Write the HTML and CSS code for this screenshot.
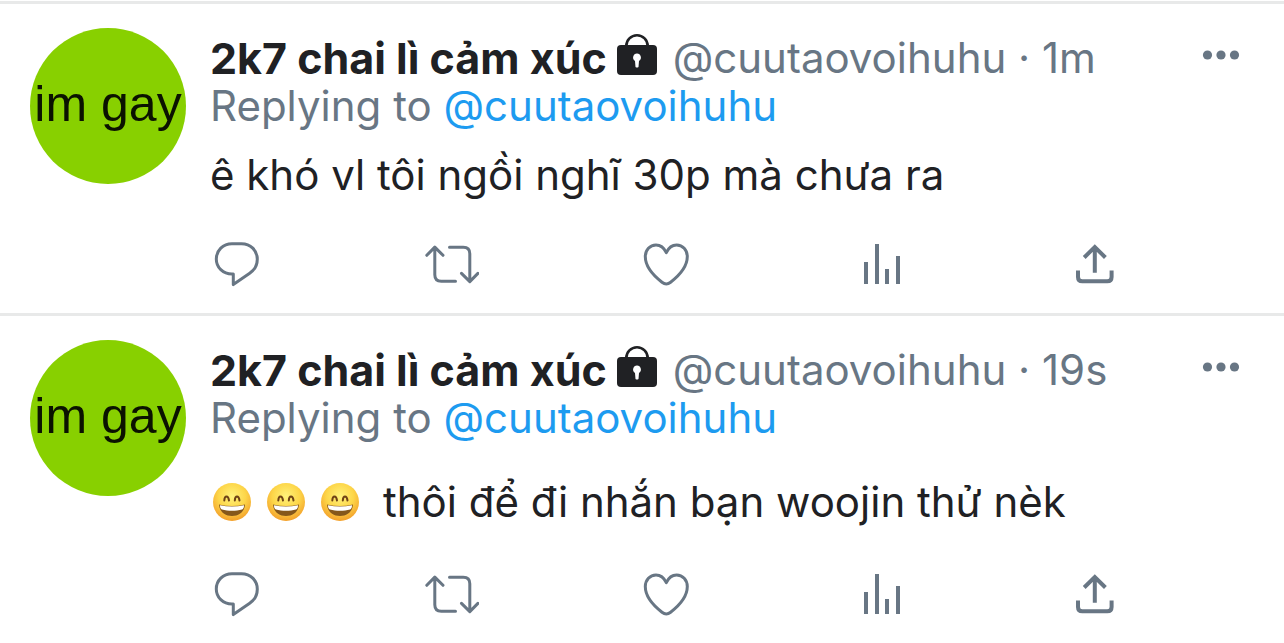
FILE: index.html
```html
<!DOCTYPE html>
<html lang="vi">
<head>
  <meta charset="UTF-8" />
  <meta name="viewport" content="width=device-width, initial-scale=1.0"/>
  <title>Tweets</title>
  <link rel="stylesheet" href="styles.css">
</head>
<body>
  <!-- shared icons -->
  <svg class="sprite" aria-hidden="true">
    <defs>
      <radialGradient id="face" cx="50%" cy="35%" r="65%">
        <stop offset="0" stop-color="#fff27a"/>
        <stop offset="0.55" stop-color="#fdd649"/>
        <stop offset="1" stop-color="#f3a02b"/>
      </radialGradient>
    </defs>
    <symbol id="reply" viewBox="0 0 54 48">
      <path d="M22 2.7h9.5c9 0 15.8 6.8 15.8 15.5 0 6-2.8 10.8-7.6 14L23.3 43.6V33H22C13 33 6.3 26.5 6.3 18S13 2.7 22 2.7z"/>
    </symbol>
    <symbol id="retweet" viewBox="0 0 54 48">
      <path d="M1.8 14.3l8-8.2 8.2 8.2M9.8 6.5v27.3q0 6.5 6.5 6.5h14.2M24.5 6.3h13.8q6.5 0 6.5 6.5v27.4M36.5 32.4l8.3 8.2 8.1-8.2"/>
    </symbol>
    <symbol id="heart" viewBox="0 0 54 48">
      <path d="M27.3 11.6C25 6.8 21.5 4 17 4 11 4 6.3 9 6.3 15.6c0 8.8 6.8 18 16.7 25.7 3.2 2.4 5.4 2.4 8.6 0 9.9-7.7 16.7-16.9 16.7-25.7C48.3 9 43.6 4 37.6 4c-4.5 0-8 2.800-10.3 7.600z"/>
    </symbol>
    <symbol id="stats" viewBox="0 0 54 48">
      <path d="M12 21v22M23 3v40M33 28v15M44 15v28"/>
    </symbol>
    <symbol id="share" viewBox="0 0 54 48">
      <path d="M10 29.5V36q0 4.3 4.3 4.3h25q4.3 0 4.3-4.3v-6.5M26.8 31.8V6M16.2 16.500L26.8 6l10.600 10.500"/>
    </symbol>
    <symbol id="lock" viewBox="0 0 40 42">
      <path d="M9.3 14v-2a10.7 10.7 0 0 1 21.4 0v2" fill="none" stroke="currentColor" stroke-width="2.6"/>
      <rect y="11" width="40" height="30" rx="4"/>
      <path d="M20 19.5a4 4 0 0 1 2 7.4l-.5 6q-1.5 1.2-3 0l-.5-6a4 4 0 0 1 2-7.4z" fill="#fff"/>
    </symbol>
    <symbol id="dots" viewBox="0 0 38 12">
      <circle cx="5.5" cy="6" r="4.6"/>
      <circle cx="19" cy="6" r="4.6"/>
      <circle cx="32.5" cy="6" r="4.6"/>
    </symbol>
    <symbol id="grin" viewBox="0 0 38 38">
      <circle cx="19" cy="19" r="19" fill="url(#face)"/>
      <path d="M11.3 17.5c.3-5.3 4-5.3 4.7 0M21.8 17.5c.3-5.3 4-5.3 4.7 0" fill="none" stroke="#704316" stroke-width="2" stroke-linecap="round"/>
      <path d="M6 21.5q13 3 26 0c-.5 7-5.5 11.5-13 11.5S6.5 28.5 6 21.5z" fill="#85571b"/>
      <path d="M7 22.3q12 2.6 24 0c0 2.5-.6 3.7-2 4.2-6 1.7-14 1.7-20 0-1.4-.5-2-1.7-2-4.2z" fill="#fff"/>
    </symbol>
  </svg>

  <main class="timeline">
    <article class="tweet">
      <div class="avatar">im gay</div>
      <div class="content">
        <header class="tweet-header">
          <span class="name">2k7 chai lì cảm xúc</span>
          <svg class="lock"><use href="#lock"/></svg>
          <span class="meta">@cuutaovoihuhu · 1m</span>
          <button class="more" type="button" aria-label="More"><svg><use href="#dots"/></svg></button>
        </header>
        <div class="replying">Replying to <a href="#">@cuutaovoihuhu</a></div>
        <p class="text">ê khó vl tôi ngồi nghĩ 30p mà chưa ra</p>
        <div class="actions">
          <button type="button" aria-label="Reply"><svg><use href="#reply"/></svg></button>
          <button type="button" aria-label="Retweet"><svg><use href="#retweet"/></svg></button>
          <button type="button" aria-label="Like"><svg><use href="#heart"/></svg></button>
          <button class="bold" type="button" aria-label="Stats"><svg><use href="#stats"/></svg></button>
          <button class="bold" type="button" aria-label="Share"><svg><use href="#share"/></svg></button>
        </div>
      </div>
    </article>

    <article class="tweet">
      <div class="avatar">im gay</div>
      <div class="content">
        <header class="tweet-header">
          <span class="name">2k7 chai lì cảm xúc</span>
          <svg class="lock"><use href="#lock"/></svg>
          <span class="meta">@cuutaovoihuhu · 19s</span>
          <button class="more" type="button" aria-label="More"><svg><use href="#dots"/></svg></button>
        </header>
        <div class="replying">Replying to <a href="#">@cuutaovoihuhu</a></div>
        <p class="text with-emoji">
          <span class="emojis">
            <svg role="img" aria-label="😄"><use href="#grin"/></svg>
            <svg role="img" aria-label="😄"><use href="#grin"/></svg>
            <svg role="img" aria-label="😄"><use href="#grin"/></svg>
          </span>
          <span>thôi để đi nhắn bạn woojin thử nèk</span>
        </p>
        <div class="actions">
          <button type="button" aria-label="Reply"><svg><use href="#reply"/></svg></button>
          <button type="button" aria-label="Retweet"><svg><use href="#retweet"/></svg></button>
          <button type="button" aria-label="Like"><svg><use href="#heart"/></svg></button>
          <button class="bold" type="button" aria-label="Stats"><svg><use href="#stats"/></svg></button>
          <button class="bold" type="button" aria-label="Share"><svg><use href="#share"/></svg></button>
        </div>
      </div>
    </article>
  </main>
</body>
</html>
```
FILE: styles.css
```css
body {
  margin: 0;
  background: #fff;
  color: #202124;
  font-family: Inter, "Liberation Sans", sans-serif;
  font-size: 42px;
  line-height: 48px;
}

.sprite {
  position: absolute;
  width: 0;
  height: 0;
}

.timeline {
  padding-top: 1px;
}

.tweet {
  display: flex;
  gap: 24px;
  padding: 24px 44px 24px 30px;
  border-top: 3px solid #e8e9e9;
}

.avatar {
  flex: none;
  width: 156px;
  height: 156px;
  border-radius: 50%;
  background: #88d000;
  color: #0b1200;
  font-family: "Liberation Sans", sans-serif;
  font-size: 50px;
  line-height: 152px;
  text-align: center;
  white-space: nowrap;
  overflow: hidden;
}

.content {
  flex: 1;
  min-width: 0;
  padding-top: 6px;
}

.tweet-header {
  display: flex;
  align-items: center;
  white-space: nowrap;
}

.name {
  font-size: 43px;
  font-weight: 700;
}

.lock {
  width: 40px;
  height: 42px;
  margin: 0 16px 6px 10px;
  fill: currentColor;
}

.meta,
.replying {
  color: #687684;
}

button {
  padding: 0;
  border: none;
  background: none;
  color: #687684;
  cursor: pointer;
}

button svg {
  display: block;
}

.more {
  margin-left: auto;
  margin-bottom: 6px;
}

.more svg {
  width: 38px;
  height: 12px;
  fill: currentColor;
}

.replying a {
  color: #1d9bf0;
  text-decoration: none;
}

.text {
  margin: 21px 0 42px;
}

.with-emoji {
  display: flex;
  align-items: center;
  gap: 24px;
  margin: 36px 0 45px;
}

.emojis {
  display: flex;
  gap: 16px;
  padding-left: 3px;
}

.emojis svg {
  width: 38px;
  height: 38px;
}

.actions {
  display: flex;
  justify-content: space-between;
  padding-right: 118px;
}

.actions svg {
  width: 54px;
  height: 48px;
  fill: none;
  stroke: currentColor;
  stroke-width: 3px;
  stroke-linecap: round;
  stroke-linejoin: round;
}

.actions .bold svg {
  stroke-width: 4px;
  stroke-linecap: butt;
  stroke-linejoin: miter;
}
```
